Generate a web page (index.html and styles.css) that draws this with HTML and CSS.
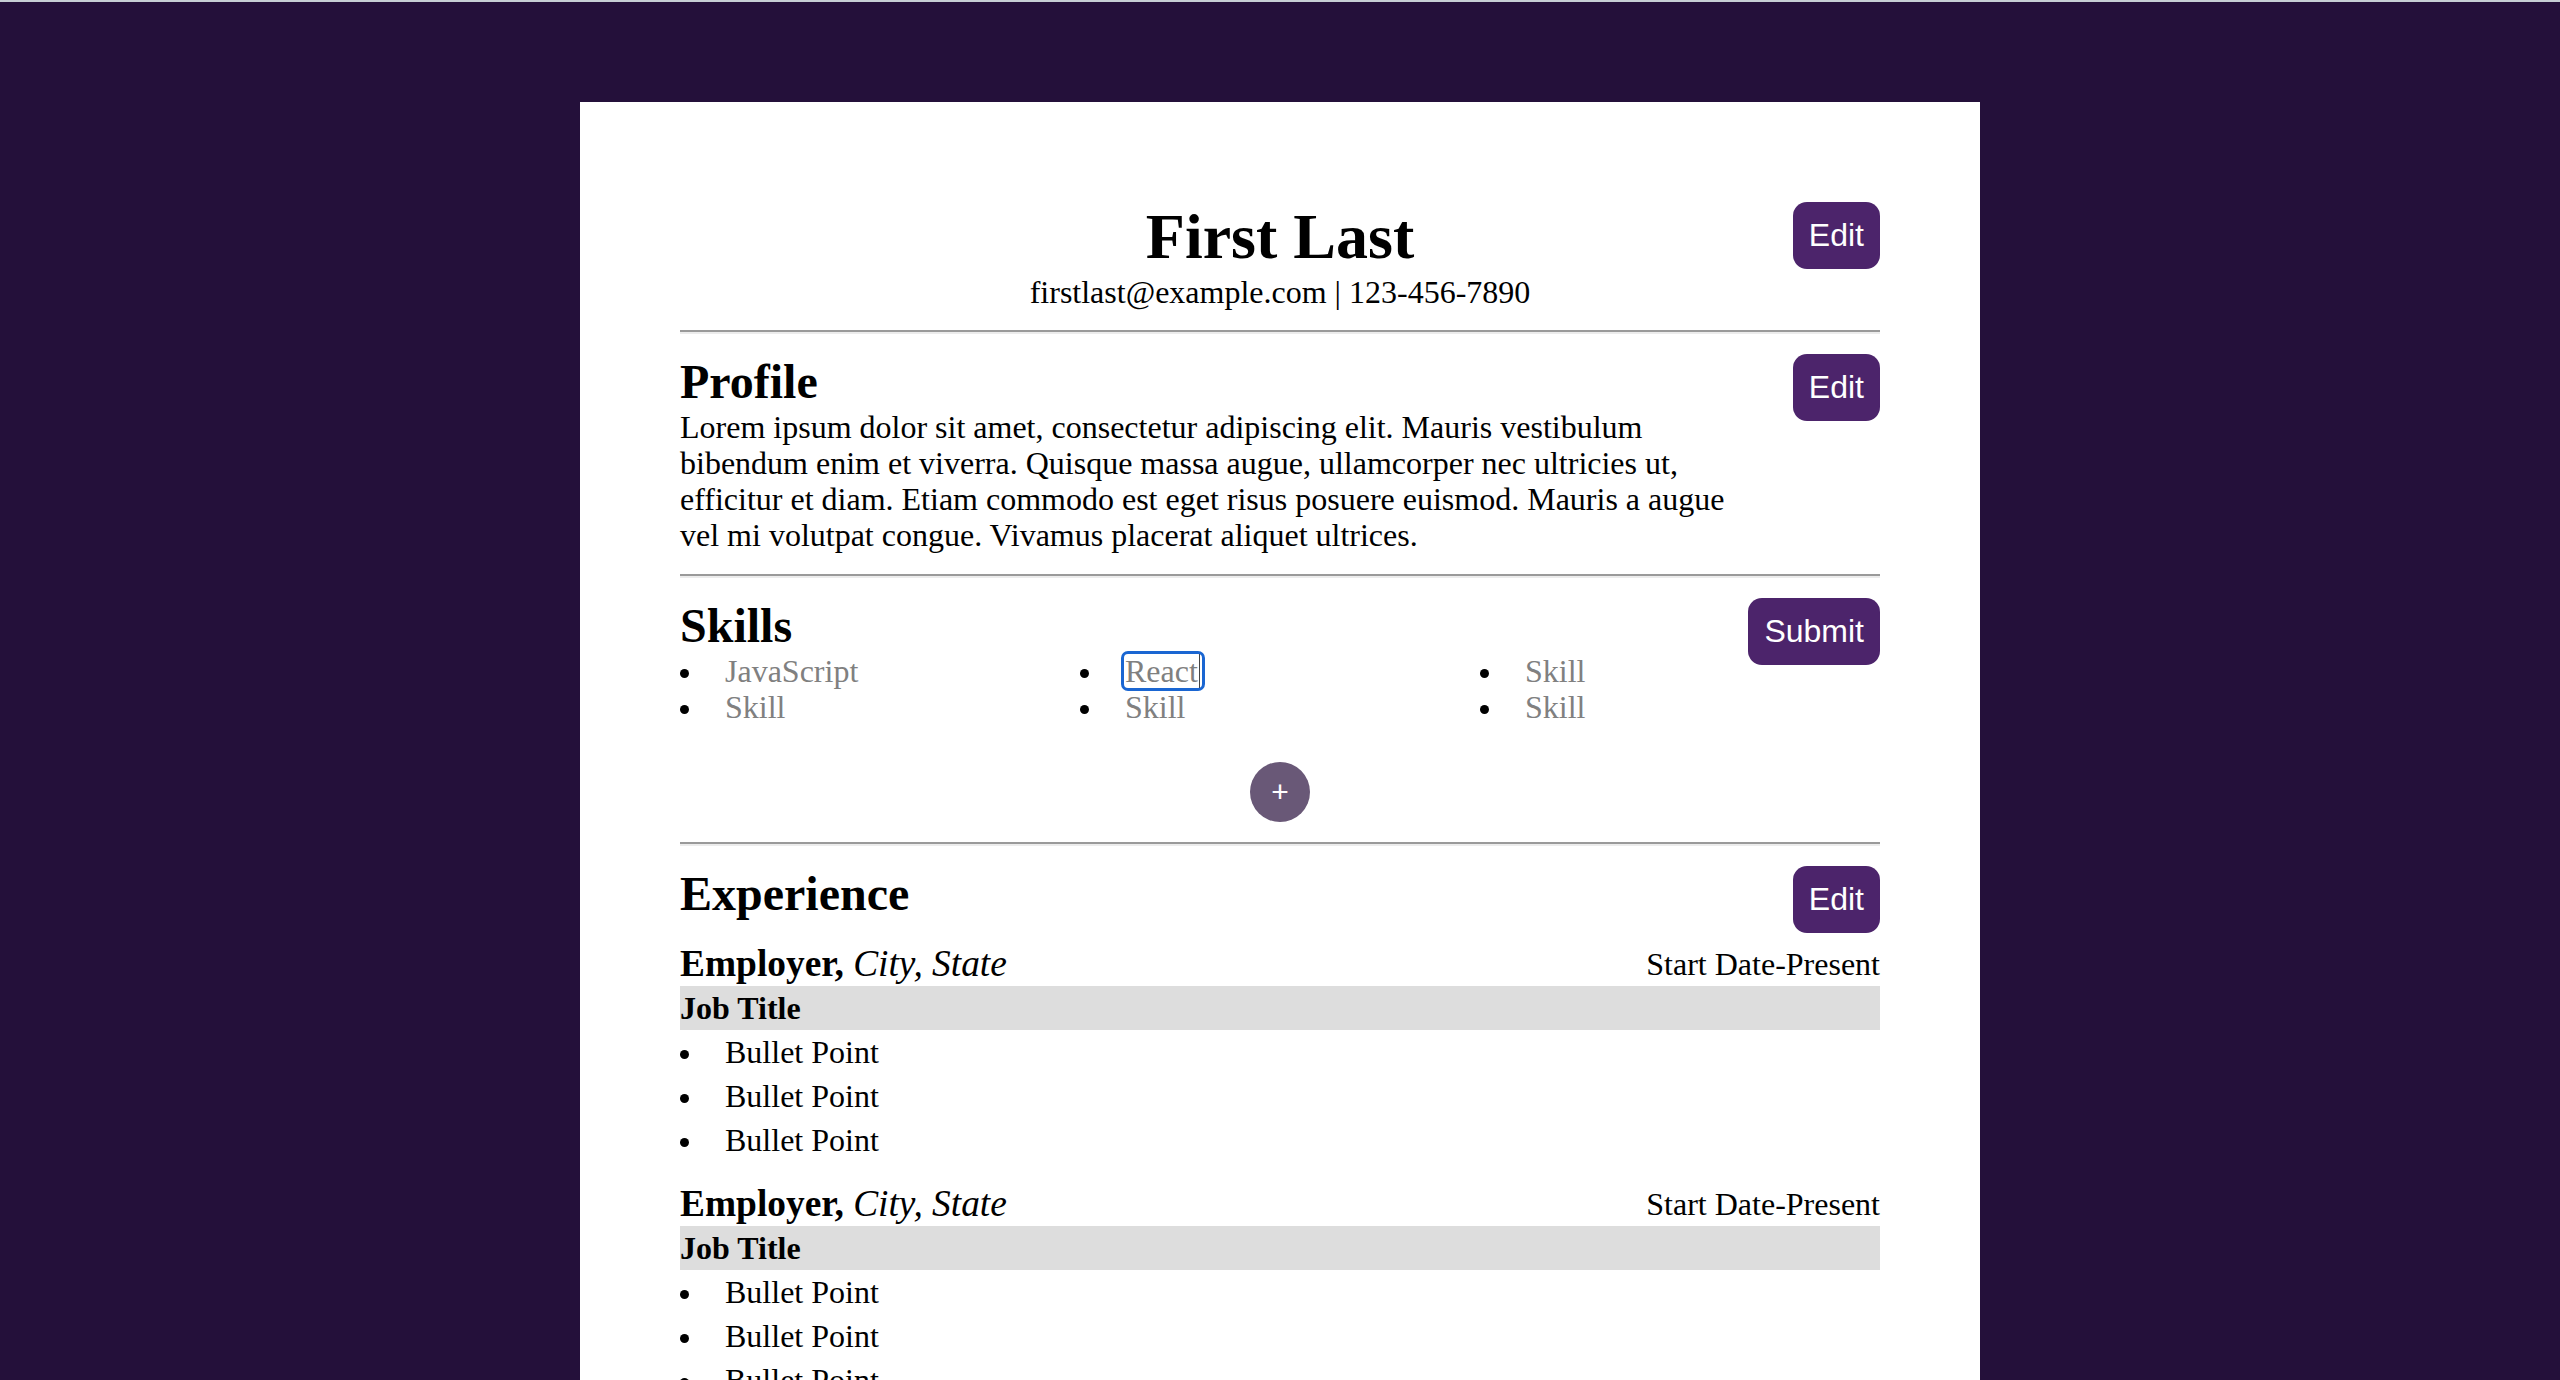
FILE: index.html
```html
<!DOCTYPE html>
<html lang="en">
<head>
<meta charset="utf-8">
<title>Resume</title>
<link rel="stylesheet" href="styles.css">
</head>
<body>
<main class="page">
  <header class="top">
    <div class="top-center">
      <h1 class="name">First Last</h1>
      <p class="contact">firstlast@example.com | 123-456-7890</p>
    </div>
    <button class="btn top-btn">Edit</button>
  </header>
  <hr class="rule">
  <section class="section">
    <h2 class="section-title">Profile</h2>
    <button class="btn section-btn">Edit</button>
    <div class="section-body">
      <p class="profile-text">Lorem ipsum dolor sit amet, consectetur adipiscing elit. Mauris vestibulum bibendum enim et viverra. Quisque massa augue, ullamcorper nec ultricies ut, efficitur et diam. Etiam commodo est eget risus posuere euismod. Mauris a augue vel mi volutpat congue. Vivamus placerat aliquet ultrices.</p>
    </div>
  </section>
  <hr class="rule">
  <section class="section">
    <h2 class="section-title">Skills</h2>
    <button class="btn section-btn">Submit</button>
    <div class="section-body">
      <ul class="skills">
        <li class="bullet"><span class="skill">JavaScript</span></li>
        <li class="bullet"><span class="skill skill-focus">React<span class="caret"></span></span></li>
        <li class="bullet"><span class="skill">Skill</span></li>
        <li class="bullet"><span class="skill">Skill</span></li>
        <li class="bullet"><span class="skill">Skill</span></li>
        <li class="bullet"><span class="skill">Skill</span></li>
      </ul>
      <div class="add-row"><button class="add-btn">+</button></div>
    </div>
  </section>
  <hr class="rule">
  <section class="section">
    <h2 class="section-title">Experience</h2>
    <button class="btn section-btn">Edit</button>
    <div class="section-body">
      <div class="job">
        <div class="job-head">
          <div class="employer"><b>Employer,</b> <i>City, State</i></div>
          <div class="dates">Start Date-Present</div>
        </div>
        <div class="job-title">Job Title</div>
        <ul class="points">
          <li class="bullet point">Bullet Point</li>
          <li class="bullet point">Bullet Point</li>
          <li class="bullet point">Bullet Point</li>
        </ul>
      </div>
      <div class="job">
        <div class="job-head">
          <div class="employer"><b>Employer,</b> <i>City, State</i></div>
          <div class="dates">Start Date-Present</div>
        </div>
        <div class="job-title">Job Title</div>
        <ul class="points">
          <li class="bullet point">Bullet Point</li>
          <li class="bullet point">Bullet Point</li>
          <li class="bullet point">Bullet Point</li>
        </ul>
      </div>
    </div>
  </section>
</main>
</body>
</html>
```

FILE: styles.css
```css
html {
  background: #24103a;
  border-top: 2px solid #c6ced4;
}

body {
  margin: 0;
  font-family: "Liberation Serif", "Times New Roman", serif;
  font-size: 32px;
  line-height: 1.125;
  color: #000;
}

.page {
  width: 1400px;
  box-sizing: border-box;
  margin: 100px auto 0;
  padding: 98px 100px 120px;
  background: #ffffff;
}

.top {
  display: grid;
  grid-template-columns: 1fr auto 1fr;
}

.top-center {
  grid-column: 2;
  text-align: center;
}

.name {
  margin: 0;
  font-size: 64px;
  font-weight: bold;
  line-height: normal;
}

.contact {
  margin: 0;
}

.top-btn {
  grid-column: 3;
  justify-self: end;
  align-self: start;
  margin-top: 2px;
}

.btn {
  font-family: "Liberation Sans", Arial, sans-serif;
  font-size: 32px;
  color: #ffffff;
  background: #4c246b;
  border: none;
  border-radius: 14px;
  padding: 15px 16px;
  line-height: normal;
  cursor: pointer;
}

.rule {
  height: 0;
  margin: 20px 0;
  border: 0;
  border-top: 2px solid #9a9a9a;
  border-bottom: 2px solid #ececec;
}

.section {
  display: grid;
  grid-template-columns: 1fr auto;
}

.section-title {
  grid-column: 1;
  grid-row: 1;
  margin: 0;
  font-size: 48px;
  font-weight: bold;
  line-height: normal;
}

.section-btn {
  grid-column: 2;
  grid-row: 1 / span 2;
  align-self: start;
}

.section-body {
  grid-column: 1 / -1;
  grid-row: 2;
}

.profile-text {
  margin: 0 0 1px;
  max-width: 1060px;
}

.bullet {
  list-style: none;
  padding-left: 45px;
}

.bullet::before {
  content: "";
  display: inline-block;
  width: 9px;
  height: 9px;
  border-radius: 50%;
  background: #000;
  margin-left: -45px;
  margin-right: 36px;
  vertical-align: 4px;
}

.skills {
  margin: 0;
  padding: 0;
  display: grid;
  grid-template-columns: repeat(3, 1fr);
}

.skill {
  color: #808080;
}

.skill-focus {
  outline: 3px solid #1a66d2;
  outline-offset: -1px;
  border-radius: 5px;
  padding: 0 3px 0 2px;
  margin-left: -2px;
}

.caret {
  display: inline-block;
  width: 1px;
  height: 34px;
  background: #444;
  vertical-align: -6px;
  margin-left: 1px;
}

.add-row {
  display: flex;
  justify-content: center;
  margin-top: 37px;
}

.add-btn {
  width: 60px;
  height: 60px;
  border-radius: 50%;
  border: none;
  background: #695877;
  color: #ffffff;
  font-family: "Liberation Sans", Arial, sans-serif;
  font-size: 30px;
  line-height: 60px;
  padding: 0;
}

.job {
  margin-top: 21px;
}

.job + .job {
  margin-top: 20px;
}

.job-head {
  display: flex;
  justify-content: space-between;
  align-items: center;
}

.employer {
  font-size: 37.4px;
  line-height: normal;
}

.employer i {
  font-weight: normal;
}

.job-title {
  background: #dddddd;
  font-weight: bold;
  padding: 4px 0;
  margin-top: 1px;
}

.points {
  margin: 0;
  padding: 0;
}

.point {
  padding-top: 4px;
  padding-bottom: 4px;
}
```
